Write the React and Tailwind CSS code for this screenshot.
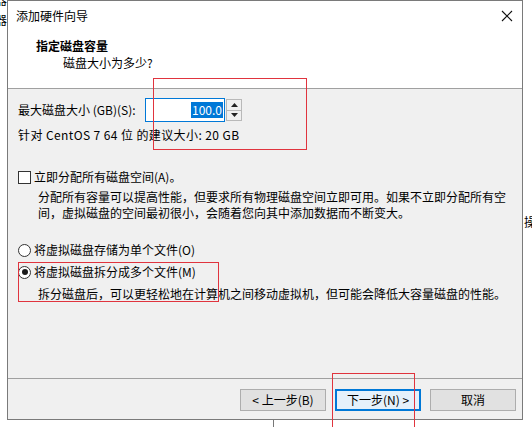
const font = { fontFamily: '"Noto Sans CJK SC", "Microsoft YaHei", sans-serif' }

function Checkbox() {
  return <div className="w-[13px] h-[13px] border border-[#333333] bg-white shrink-0" />
}

function Radio({ checked }) {
  return (
    <div className="w-[13px] h-[13px] rounded-full border border-[#333333] bg-white shrink-0 flex items-center justify-center">
      {checked && <div className="w-[6px] h-[6px] rounded-full bg-[#1a1a1a]" />}
    </div>
  )
}

function Button({ children, focused }) {
  return (
    <div
      className={
        'w-[86px] h-[22px] flex items-center justify-center text-[12px] leading-[16px] text-black ' +
        (focused ? 'border-2 border-[#0078d7] bg-[#e5f1fb]' : 'border border-[#adadad] bg-[#e1e1e1]')
      }
    >
      {children}
    </div>
  )
}

export default function App() {
  return (
    <div className="relative w-[532px] h-[427px] overflow-hidden bg-white text-black" style={font}>
      <div className="flex">
        {/* left strip of the window behind */}
        <div className="w-[7px] h-[419px] overflow-hidden flex flex-col text-[12px] leading-[16px]">
          <span className="ml-[-5px] mt-[-8px]">器</span>
          <span className="ml-[-5px] mt-[4px]">器</span>
        </div>

        {/* wizard window */}
        <div className="w-[516px] h-[420px] border border-[#7a7a7a] flex flex-col bg-white">
          <div className="h-[29px] flex items-center justify-between pl-[8px] pr-[8px] text-[12px] leading-[16px]">
            <span>添加硬件向导</span>
            <svg width="12" height="12" viewBox="0 0 12 12" className="mr-[1px]">
              <path d="M1 1 L11 11 M11 1 L1 11" stroke="#111" strokeWidth="1.1" />
            </svg>
          </div>
          <div className="h-[58px] flex flex-col pl-[28px] pt-[8px] text-[12px] leading-[16px]">
            <span className="font-bold">指定磁盘容量</span>
            <span className="pl-[27px] mt-[1px]">磁盘大小为多少?</span>
          </div>
          <div className="border-t border-[#a0a0a0] flex-1 bg-[#f0f0f0] flex flex-col text-[12px] leading-[16px]">
            <div className="pl-[10px] flex flex-col">
              <div className="h-[24px] mt-[9px] flex items-center">
                <span className="w-[127px]">最大磁盘大小 (GB)(S):</span>
                <div className="w-[80px] h-[24px] border border-[#0078d7] bg-white flex items-center justify-end pr-[1px]">
                  <span className="bg-[#0078d7] text-white px-[1px]">100.0</span>
                </div>
                <div className="w-[16px] h-[22px] ml-[1px] border border-[#b9b9b9] bg-[#f0f0f0] flex flex-col">
                  <div className="flex-1 flex items-center justify-center border-b border-[#b9b9b9]">
                    <svg width="7" height="4" viewBox="0 0 7 4"><path d="M0 4 L3.5 0 L7 4 Z" fill="#222" /></svg>
                  </div>
                  <div className="flex-1 flex items-center justify-center">
                    <svg width="7" height="4" viewBox="0 0 7 4"><path d="M0 0 L3.5 4 L7 0 Z" fill="#222" /></svg>
                  </div>
                </div>
              </div>
              <div className="h-[16px] mt-[5px] tracking-[0.4px]">针对 CentOS 7 64 位 的建议大小: 20 GB</div>

              <div className="h-[16px] mt-[26px] flex items-center gap-[3px]">
                <Checkbox />
                <span>立即分配所有磁盘空间(A)。</span>
              </div>
              <div className="mt-[4px] pl-[20px] pr-[12px]">
                分配所有容量可以提高性能，但要求所有物理磁盘空间立即可用。如果不立即分配所有空间，虚拟磁盘的空间最初很小，会随着您向其中添加数据而不断变大。
              </div>

              <div className="h-[16px] mt-[21px] flex items-center gap-[3px]">
                <Radio />
                <span>将虚拟磁盘存储为单个文件(O)</span>
              </div>
              <div className="h-[16px] mt-[6px] flex items-center gap-[3px]">
                <Radio checked />
                <span>将虚拟磁盘拆分成多个文件(M)</span>
              </div>
              <div className="h-[16px] mt-[6px] pl-[20px]">
                拆分磁盘后，可以更轻松地在计算机之间移动虚拟机，但可能会降低大容量磁盘的性能。
              </div>
            </div>

            <div className="mt-auto border-t border-[#a0a0a0] h-[41px] flex justify-end items-start gap-[9px] pt-[10px] pr-[6px]">
              <Button>&lt; 上一步(B)</Button>
              <Button focused>下一步(N) &gt;</Button>
              <Button>取消</Button>
            </div>
          </div>
        </div>

        {/* right strip of the window behind */}
        <div className="w-[9px] h-[419px] overflow-hidden text-[12px] leading-[16px] flex flex-col">
          <span className="mt-[214px] ml-[1px]">操</span>
        </div>
      </div>
      <div className="h-[7px] flex">
        <div className="w-[273px]" />
        <div className="w-px h-full bg-[#777777]" />
      </div>

      {/* red annotation boxes */}
      <div className="absolute left-[153px] top-[78px] w-[154px] h-[72px] border border-[#e0343e]" />
      <div className="absolute left-[18px] top-[262px] w-[201px] h-[40px] border border-[#e0343e]" />
      <div className="absolute left-[332px] top-[373px] w-[83px] h-[60px] border border-[#e0343e]" />
    </div>
  )
}
